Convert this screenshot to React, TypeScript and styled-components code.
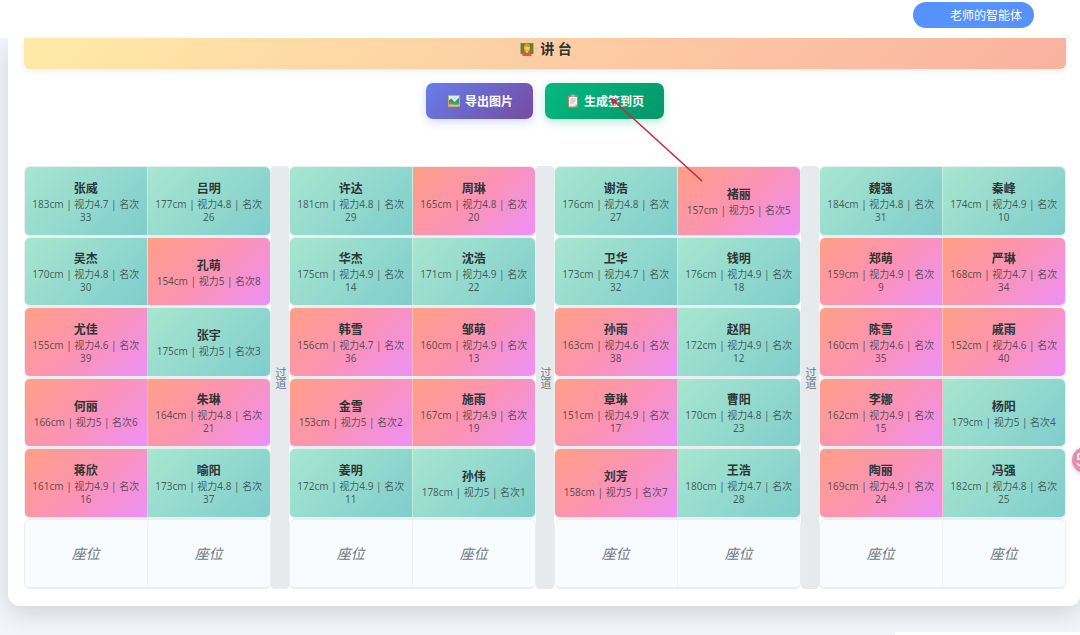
import React from "react";
import styled, { createGlobalStyle } from "styled-components";

const GlobalStyle = createGlobalStyle`
  *, *::before, *::after { box-sizing: border-box; }
  body {
    margin: 0;
    background: #f2f6fa;
    color: #2d3436;
    font-family: "Noto Sans", "Noto Sans CJK SC", sans-serif;
  }
  button { font-family: inherit; cursor: pointer; }
`;

const Page = styled.div`
  min-height: 100vh;
  overflow: hidden;
`;

const TopBar = styled.header`
  position: relative;
  z-index: 1;
  display: flex;
  justify-content: flex-end;
  height: 38px;
  padding: 2px 46px 0 0;
  background: #fff;
`;

const AgentButton = styled.button`
  height: 26px;
  padding: 2px 12px 0 37px;
  border: 0;
  border-radius: 13px;
  background: #5592fb;
  color: #fff;
  font-size: 12px;
  line-height: 24px;
`;

const Card = styled.main`
  margin-left: 8px;
  padding: 0 14px 17px 16px;
  background: #fff;
  border-radius: 0 0 10px 12px;
  box-shadow: 0 8px 24px rgba(0, 0, 0, 0.14);
`;

const Podium = styled.h1`
  display: flex;
  align-items: center;
  justify-content: center;
  gap: 6px;
  height: 31px;
  margin: 0;
  padding: 0 0 10px 2px;
  border-radius: 0 0 6px 6px;
  background: linear-gradient(135deg, #ffeaa7, #fab1a0);
  box-shadow: 0 2px 6px rgba(0, 0, 0, 0.08);
  font-size: 14px;
  line-height: 20px;
`;

const Actions = styled.div`
  position: relative;
  z-index: 1;
  display: flex;
  justify-content: center;
  gap: 12px;
  padding: 14px 0 47px;
`;

const ActionButton = styled.button<{ $tone: "violet" | "green" }>`
  display: flex;
  align-items: center;
  gap: 4px;
  height: 36px;
  padding: 0 20px;
  border: 0;
  border-radius: 7px;
  color: #fff;
  font-size: 12px;
  font-weight: 700;
  background: ${(p) =>
    p.$tone === "violet"
      ? "linear-gradient(135deg, #667eea, #764ba2)"
      : "linear-gradient(135deg, #06b981, #059669)"};
  box-shadow: 0 3px 10px
    ${(p) => (p.$tone === "violet" ? "rgba(102, 126, 234, 0.3)" : "rgba(16, 185, 129, 0.3)")};
`;

const Pointer = styled.svg`
  position: absolute;
  left: 50%;
  top: 0;
  margin-left: 60px;
  pointer-events: none;
`;

const Room = styled.section`
  display: grid;
  grid-template-columns: minmax(0, 1fr) 18px minmax(0, 1fr) 18px minmax(0, 1fr) 18px minmax(0, 1fr);
  min-height: 423px;
`;

const Column = styled.div`
  display: grid;
  grid-auto-rows: 1fr;
`;

const Desk = styled.div`
  display: grid;
  grid-template-columns: 1fr 1fr;
  overflow: hidden;
  border: 2px solid #e9eef0;
  border-width: 1px 1px 2px;
  border-radius: 6px;
`;

const Aisle = styled.div`
  display: flex;
  align-items: center;
  justify-content: center;
  border-radius: 4px;
  background: #e7eaed;
  color: #6c757d;
  font-size: 11px;
  line-height: 18px;
  writing-mode: vertical-rl;
`;

type SeatTone = "boy" | "girl" | "empty";

const seatFill: Record<SeatTone, string> = {
  boy: "linear-gradient(135deg, #a8e6cf, #7fcdcd)",
  girl: "linear-gradient(135deg, #ff9f86, #fb93b4 50%, #ee90f8)",
  empty: "#f8fcff",
};

const Seat = styled.div<{ $tone: SeatTone }>`
  display: flex;
  flex-direction: column;
  align-items: center;
  justify-content: center;
  padding: 2px 7px 0;
  background: ${(p) => seatFill[p.$tone]};
  text-align: center;

  &:first-child {
    border-right: 1px solid ${(p) => (p.$tone === "empty" ? "#eff3f6" : "rgba(255, 255, 255, 0.35)")};
  }
`;

const Name = styled.strong`
  font-size: 12px;
  line-height: 18px;
`;

const Detail = styled.span`
  color: rgba(45, 52, 54, 0.76);
  font-size: 10px;
  line-height: 13px;
`;

const EmptyLabel = styled.em`
  color: #6c757d;
  font-size: 14px;
  line-height: 20px;
`;

const FloatButton = styled.button`
  position: fixed;
  right: -18px;
  top: 447px;
  display: flex;
  align-items: center;
  width: 26px;
  height: 26px;
  padding: 0 4px;
  border: 0;
  border-radius: 50%;
  background: #e58fac;
  box-shadow: 0 1px 5px rgba(0, 0, 0, 0.2);
`;

const BottomPanel = styled.div`
  position: fixed;
  right: 0;
  bottom: 0;
  width: 185px;
  height: 3px;
  background: #fff;
`;

const TeacherIcon = () => (
  <svg width="14" height="14" viewBox="0 0 28 28" aria-hidden="true">
    <rect x="1" y="2" width="26" height="22" rx="1" fill="#9a7440" />
    <rect x="3" y="4" width="22" height="18" fill="#4f8a35" />
    <path d="M8 19V10a6 7 0 0 1 12 0v9z" fill="#d9a12e" />
    <circle cx="14" cy="11" r="5" fill="#ffd04f" />
    <path d="M9 10c0-5 10-5 10 0-3 0-5-1-6-2-1 1-2 2-4 2z" fill="#b98419" />
    <path d="M5 28v-4c0-4 4-6 9-6s9 2 9 6v4z" fill="#e8573f" />
    <path d="M11 18l3 4 3-4z" fill="#fff0d0" />
  </svg>
);

const PictureIcon = () => (
  <svg width="15" height="14" viewBox="0 0 30 28" aria-hidden="true">
    <rect x="4" y="2" width="24" height="24" rx="1" fill="#d3a56c" />
    <rect x="6" y="4" width="20" height="20" fill="#d5f1f5" />
    <path d="M6 12l5-3 6 7 9-9v12H6z" fill="#3f918a" />
    <path d="M6 17c7-3 12 3 20 0v7H6z" fill="#4aa66b" />
    <path d="M6 22c7-3 12 1 20-1v3H6z" fill="#e9c46a" />
    <circle cx="18" cy="8" r="2" fill="#ffd65a" />
  </svg>
);

const ClipboardIcon = () => (
  <svg width="15" height="14" viewBox="0 0 30 28" aria-hidden="true">
    <rect x="6" y="3" width="20" height="24" rx="2" fill="#c98358" />
    <path d="M8 6h16v15l-4 4H8z" fill="#f5f1f2" />
    <path d="M24 21h-4v4z" fill="#c5bfc7" />
    <rect x="12" y="1" width="8" height="5" rx="1" fill="#a7afb7" />
    <path d="M11 10h10M11 14h10M11 18h7" stroke="#aaa3b0" strokeWidth="1.5" />
  </svg>
);

type Student = [name: string, tone: "boy" | "girl", height: number, sight: string, rank: number];

const columns: Student[][] = [
  [
    ["张威", "boy", 183, "4.7", 33], ["吕明", "boy", 177, "4.8", 26],
    ["吴杰", "boy", 170, "4.8", 30], ["孔萌", "girl", 154, "5", 8],
    ["尤佳", "girl", 155, "4.6", 39], ["张宇", "boy", 175, "5", 3],
    ["何丽", "girl", 166, "5", 6], ["朱琳", "girl", 164, "4.8", 21],
    ["蒋欣", "girl", 161, "4.9", 16], ["喻阳", "boy", 173, "4.8", 37],
  ],
  [
    ["许达", "boy", 181, "4.8", 29], ["周琳", "girl", 165, "4.8", 20],
    ["华杰", "boy", 175, "4.9", 14], ["沈浩", "boy", 171, "4.9", 22],
    ["韩雪", "girl", 156, "4.7", 36], ["邹萌", "girl", 160, "4.9", 13],
    ["金雪", "girl", 153, "5", 2], ["施雨", "girl", 167, "4.9", 19],
    ["姜明", "boy", 172, "4.9", 11], ["孙伟", "boy", 178, "5", 1],
  ],
  [
    ["谢浩", "boy", 176, "4.8", 27], ["褚丽", "girl", 157, "5", 5],
    ["卫华", "boy", 173, "4.7", 32], ["钱明", "boy", 176, "4.9", 18],
    ["孙雨", "girl", 163, "4.6", 38], ["赵阳", "boy", 172, "4.9", 12],
    ["章琳", "girl", 151, "4.9", 17], ["曹阳", "boy", 170, "4.8", 23],
    ["刘芳", "girl", 158, "5", 7], ["王浩", "boy", 180, "4.7", 28],
  ],
  [
    ["魏强", "boy", 184, "4.8", 31], ["秦峰", "boy", 174, "4.9", 10],
    ["郑萌", "girl", 159, "4.9", 9], ["严琳", "girl", 168, "4.7", 34],
    ["陈雪", "girl", 160, "4.6", 35], ["戚雨", "girl", 152, "4.6", 40],
    ["李娜", "girl", 162, "4.9", 15], ["杨阳", "boy", 179, "5", 4],
    ["陶丽", "girl", 169, "4.9", 24], ["冯强", "boy", 182, "4.8", 25],
  ],
];

const ROWS = 6;

function SeatCell({ student }: { student?: Student }) {
  if (!student) {
    return (
      <Seat $tone="empty">
        <EmptyLabel>座位</EmptyLabel>
      </Seat>
    );
  }
  const [name, tone, height, sight, rank] = student;
  return (
    <Seat $tone={tone}>
      <Name>{name}</Name>
      <Detail>{`${height}cm | 视力${sight} | 名次${rank}`}</Detail>
    </Seat>
  );
}

export default function App() {
  return (
    <Page>
      <GlobalStyle />
      <TopBar>
        <AgentButton type="button">老师的智能体</AgentButton>
      </TopBar>
      <Card>
        <Podium>
          <TeacherIcon />
          讲 台
        </Podium>
        <Actions>
          <ActionButton type="button" $tone="violet">
            <PictureIcon />
            导出图片
          </ActionButton>
          <ActionButton type="button" $tone="green">
            <ClipboardIcon />
            生成签到页
          </ActionButton>
          <Pointer width="104" height="118" viewBox="0 0 104 118" aria-hidden="true">
            <path d="M8 31L97 112" stroke="#d3243a" strokeWidth="1.6" fill="none" />
            <path d="M5 29l8 2-5 5z" fill="#d3243a" />
          </Pointer>
        </Actions>
        <Room>
          {columns.map((students, c) => (
            <React.Fragment key={c}>
              {c > 0 && <Aisle>过道</Aisle>}
              <Column>
                {Array.from({ length: ROWS }, (_, r) => (
                  <Desk key={r}>
                    <SeatCell student={students[r * 2]} />
                    <SeatCell student={students[r * 2 + 1]} />
                  </Desk>
                ))}
              </Column>
            </React.Fragment>
          ))}
        </Room>
      </Card>
      <FloatButton type="button" aria-label="助手">
        <svg width="18" height="18" viewBox="0 0 18 18" fill="none" stroke="#fff" strokeWidth="1.6" aria-hidden="true">
          <path d="M2 3v5h10V3H2M7 1v10M1 12c2 4 9 4 13 1" />
        </svg>
      </FloatButton>
      <BottomPanel />
    </Page>
  );
}
